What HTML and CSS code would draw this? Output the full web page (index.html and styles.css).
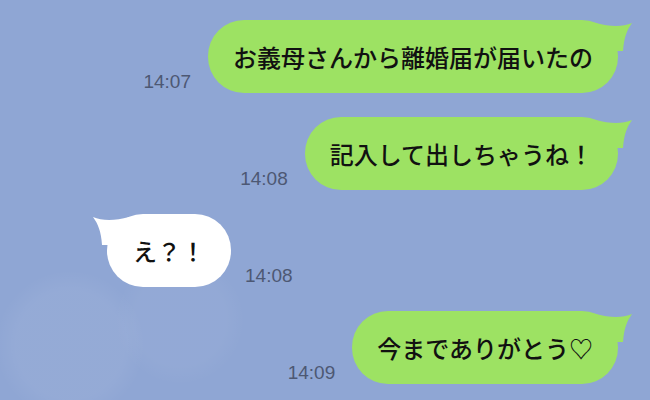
FILE: index.html
```html
<!DOCTYPE html>
<html lang="ja">

<head>
    <meta charset="UTF-8">
    <meta name="viewport" content="width=device-width, initial-scale=1.0">
    <title>トーク</title>
    <link rel="stylesheet" href="styles.css">
</head>

<body>

    <div class="chat">
        <!-- 自分 -->
        <div class="row me">
            <span class="time">14:07</span>
            <div class="bubble green">
                お義母さんから離婚届が届いたの
                <svg class="tail" viewBox="0 0 40 32"><path d="M0 3 C14 7 27 7 36 3 C31 10 28 17 27 31 L0 31 Z" /></svg>
            </div>
        </div>

        <div class="row me">
            <span class="time">14:08</span>
            <div class="bubble green">
                記入して出しちゃうね！
                <svg class="tail" viewBox="0 0 40 32"><path d="M0 3 C14 7 27 7 36 3 C31 10 28 17 27 31 L0 31 Z" /></svg>
            </div>
        </div>

        <!-- 相手 -->
        <div class="row them">
            <div class="bubble white">
                え？！
                <svg class="tail" viewBox="0 0 40 32"><path d="M0 3 C14 7 27 7 36 3 C31 10 28 17 27 31 L0 31 Z" /></svg>
            </div>
            <span class="time">14:08</span>
        </div>

        <div class="row me">
            <span class="time">14:09</span>
            <div class="bubble green">
                今までありがとう♡
                <svg class="tail" viewBox="0 0 40 32"><path d="M0 3 C14 7 27 7 36 3 C31 10 28 17 27 31 L0 31 Z" /></svg>
            </div>
        </div>
    </div>

</body>

</html>
```

FILE: styles.css
```css
* {
    box-sizing: border-box;
}

body {
    margin: 0;
    width: 650px;
    height: 400px;
    overflow: hidden;
    background-color: #8fa6d4;
    background-image:
        radial-gradient(circle at 70px 345px, rgba(255, 255, 255, 0.05) 0, rgba(255, 255, 255, 0.05) 55px, rgba(255, 255, 255, 0) 75px),
        radial-gradient(circle at 180px 320px, rgba(255, 255, 255, 0.04) 0, rgba(255, 255, 255, 0.04) 45px, rgba(255, 255, 255, 0) 65px);
    font-family: 'Noto Sans CJK JP', 'Noto Sans', sans-serif;
}

.chat {
    display: flex;
    flex-direction: column;
    gap: 24px;
    padding: 20px 32px 0 107px;
}

.row {
    display: flex;
    align-items: flex-end;
    gap: 17px;
}

.me {
    justify-content: flex-end;
}

.them {
    justify-content: flex-start;
    gap: 14px;
}

.time {
    font-family: 'Liberation Sans', Arial, sans-serif;
    font-size: 19px;
    line-height: 19px;
    color: #4d5873;
    margin-bottom: 2px;
}

.bubble {
    position: relative;
    display: flex;
    align-items: center;
    height: 73px;
    padding: 0 25px;
    border-radius: 36px;
    font-size: 24px;
    font-weight: 500;
    color: #111;
    white-space: nowrap;
}

.green {
    background-color: #9de263;
}

.white {
    background-color: #fff;
    padding: 0 26px;
}

/* しっぽ */
.tail {
    position: absolute;
    top: 0;
    width: 40px;
    height: 32px;
}

.green .tail {
    right: -18px;
    fill: #9de263;
}

.white .tail {
    left: -18px;
    fill: #fff;
    transform: scaleX(-1);
}
```
